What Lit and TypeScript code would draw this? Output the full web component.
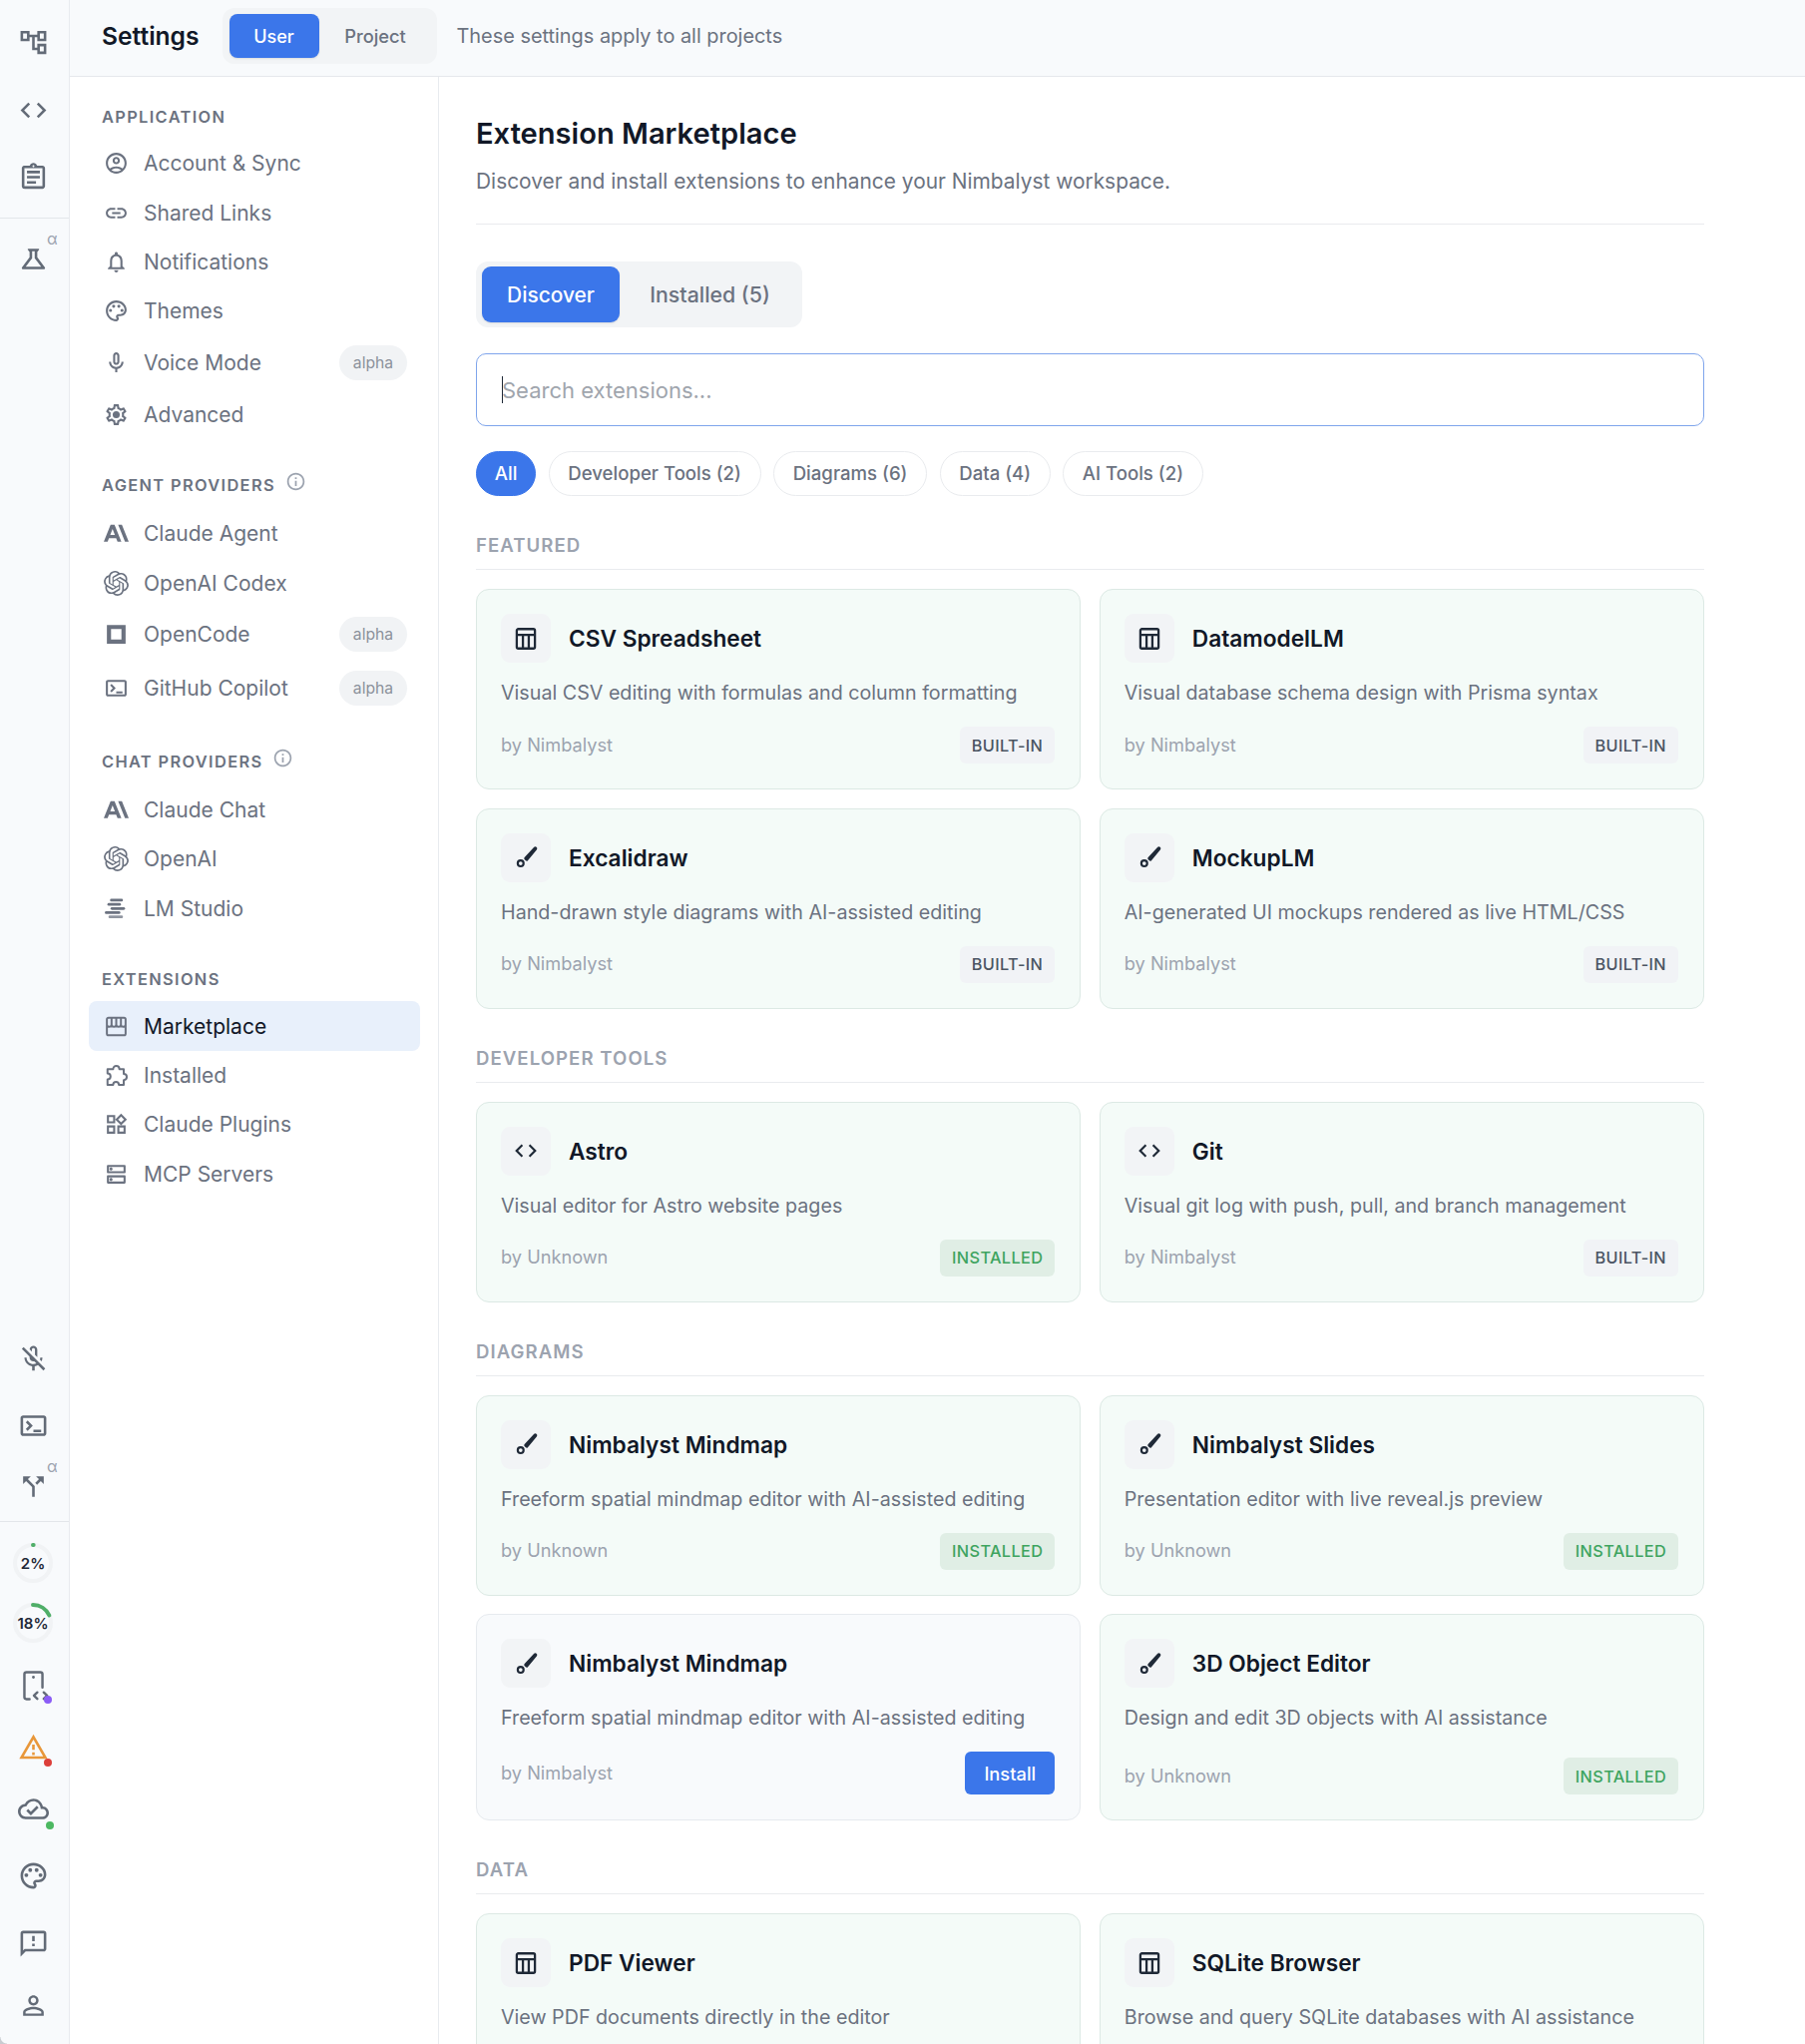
import { LitElement, html, css, svg } from "lit";
import { customElement } from "lit/decorators.js";

const P: Record<string, any> = {
  tree: svg`<path d="M22 11V3h-7v3H9V3H2v8h7V8h2v10h4v3h7v-8h-7v3h-2V8h2v3h7zM7 9H4V5h3v4zm10 6h3v4h-3v-4zm0-10h3v4h-3V5z"/>`,
  code: svg`<path d="M9.4 16.6L4.8 12l4.6-4.6L8 6l-6 6 6 6 1.4-1.4zm5.2 0l4.6-4.6-4.6-4.6L16 6l6 6-6 6-1.4-1.4z"/>`,
  clip: svg`<path d="M7 15h7v2H7zm0-4h10v2H7zm0-4h10v2H7zm12-4h-4.18C14.4 1.84 13.3 1 12 1c-1.3 0-2.4.84-2.82 2H5c-.14 0-.27.01-.4.04-.39.08-.74.28-1.01.55-.18.18-.33.4-.43.64-.1.23-.16.49-.16.77v14c0 .27.06.54.16.78s.25.45.43.64c.27.27.62.47 1.01.55.13.02.26.03.4.03h14c1.1 0 2-.9 2-2V5c0-1.1-.9-2-2-2zm-7-.25c.41 0 .75.34.75.75s-.34.75-.75.75-.75-.34-.75-.75.34-.75.75-.75zM19 19H5V5h14v14z"/>`,
  flask: svg`<path d="M13 11.33L18 18H6l5-6.67V6h2m2.96-2H8.04c-.42 0-.65.48-.39.81L9 6.5v4.17L3.2 18.4c-.49.66-.02 1.6.8 1.6h16c.82 0 1.29-.94.8-1.6L15 10.67V6.5l1.35-1.69c.26-.33.03-.81-.39-.81z"/>`,
  micoff: svg`<path d="M10.8 4.9c0-.66.54-1.2 1.2-1.2s1.2.54 1.2 1.2l-.01 3.91L15 10.6V5c0-1.66-1.34-3-3-3-1.54 0-2.79 1.16-2.96 2.65l1.76 1.76V4.9zM19 11h-1.7c0 .58-.1 1.13-.27 1.64l1.27 1.27c.44-.88.7-1.87.7-2.91zM4.41 2.86L3 4.27l6 6V11c0 1.66 1.34 3 3 3 .23 0 .44-.03.65-.08l1.66 1.66c-.71.33-1.5.52-2.31.52-2.76 0-5.3-2.1-5.3-5.1H5c0 3.41 2.72 6.23 6 6.72V21h2v-3.28c.91-.13 1.77-.45 2.55-.9l4.2 4.2 1.41-1.41L4.41 2.86z"/>`,
  term: svg`<path d="M20 4H4c-1.1 0-2 .9-2 2v12c0 1.1.9 2 2 2h16c1.1 0 2-.9 2-2V6c0-1.1-.9-2-2-2zm0 14H4V6h16v12zm-2-1h-6v-2h6v2zM7.5 16l-1.41-1.41L8.67 12 6.09 9.41 7.5 8l4 4-4 4z"/>`,
  split: svg`<path d="M14 4l2.29 2.29-2.88 2.88 1.42 1.42 2.88-2.88L20 10V4h-6zm-4 0H4v6l2.29-2.29 4.71 4.7V20h2v-8.41l-5.29-5.3L10 4z"/>`,
  warn: svg`<path transform="translate(0 -1.4)" d="M12 5.99L19.53 19H4.47L12 5.99M12 2L1 21h22L12 2zm1 14h-2v2h2v-2zm0-6h-2v4h2v-4z"/>`,
  cloud: svg`<path d="M19.35 10.04C18.67 6.59 15.64 4 12 4 9.11 4 6.6 5.64 5.35 8.04 2.34 8.36 0 10.91 0 14c0 3.31 2.69 6 6 6h13c2.76 0 5-2.24 5-5 0-2.64-2.05-4.78-4.65-4.96zM19 18H6c-2.21 0-4-1.79-4-4 0-2.05 1.53-3.76 3.56-3.97l1.07-.11.5-.95C8.08 7.14 9.94 6 12 6c2.62 0 4.88 1.86 5.39 4.43l.3 1.5 1.53.11c1.56.1 2.78 1.41 2.78 2.96 0 1.65-1.35 3-3 3zm-9-3.82l-2.09-2.09L6.5 13.5 10 17l6.01-6.01-1.41-1.41z"/>`,
  palette: svg`<path d="M12 22C6.49 22 2 17.51 2 12S6.49 2 12 2s10 4.04 10 9c0 3.31-2.69 6-6 6h-1.77c-.28 0-.5.22-.5.5 0 .12.05.23.13.33.41.47.64 1.06.64 1.67 0 1.38-1.12 2.5-2.5 2.5zm0-18c-4.41 0-8 3.59-8 8s3.59 8 8 8c.28 0 .5-.22.5-.5 0-.16-.08-.28-.14-.35-.41-.46-.63-1.05-.63-1.65 0-1.38 1.12-2.5 2.5-2.5H16c2.21 0 4-1.79 4-4 0-3.86-3.59-7-8-7z"/><circle cx="6.5" cy="11.5" r="1.5"/><circle cx="9.5" cy="7.5" r="1.5"/><circle cx="14.5" cy="7.5" r="1.5"/><circle cx="17.5" cy="11.5" r="1.5"/>`,
  feedback: svg`<path d="M20 2H4c-1.1 0-1.99.9-1.99 2L2 22l4-4h14c1.1 0 2-.9 2-2V4c0-1.1-.9-2-2-2zm0 14H5.17L4 17.17V4h16v12zm-9-4h2v2h-2zm0-6h2v4h-2z"/>`,
  person: svg`<path d="M12 5.9c1.16 0 2.1.94 2.1 2.1s-.94 2.1-2.1 2.1S9.9 9.16 9.9 8s.94-2.1 2.1-2.1m0 9c2.97 0 6.1 1.46 6.1 2.1v1.1H5.9V17c0-.64 3.13-2.1 6.1-2.1M12 4C9.79 4 8 5.79 8 8s1.79 4 4 4 4-1.79 4-4-1.79-4-4-4zm0 9c-2.67 0-8 1.34-8 4v3h16v-3c0-2.66-5.33-4-8-4z"/>`,
  filecode: svg`<path fill="none" stroke="currentColor" stroke-width="1.9" stroke-linecap="round" stroke-linejoin="round" d="M9 22H6.6A1.6 1.6 0 0 1 5 20.4V2.8a1.6 1.6 0 0 1 1.6-1.6h10.8a1.6 1.6 0 0 1 1.6 1.6V13M15 16.8l-2.6 2.5 2.6 2.5M20 16.8l2.6 2.5-2.6 2.5"/><circle cx="12" cy="5" r="1.1"/>`,
  account: svg`<path d="M12 2C6.48 2 2 6.48 2 12s4.48 10 10 10 10-4.48 10-10S17.52 2 12 2zM7.35 18.5C8.66 17.56 10.26 17 12 17s3.34.56 4.65 1.5c-1.31.94-2.91 1.5-4.65 1.5s-3.34-.56-4.65-1.5zm10.79-1.38C16.45 15.8 14.32 15 12 15s-4.45.8-6.14 2.12C4.7 15.73 4 13.95 4 12c0-4.42 3.58-8 8-8s8 3.58 8 8c0 1.95-.7 3.73-1.86 5.12z"/><path d="M12 6c-1.93 0-3.5 1.57-3.5 3.5S10.07 13 12 13s3.5-1.57 3.5-3.5S13.93 6 12 6zm0 5c-.83 0-1.5-.67-1.5-1.5S11.17 8 12 8s1.5.67 1.5 1.5S12.83 11 12 11z"/>`,
  link: svg`<path d="M3.9 12c0-1.71 1.39-3.1 3.1-3.1h4V7H7c-2.76 0-5 2.24-5 5s2.24 5 5 5h4v-1.9H7c-1.71 0-3.1-1.39-3.1-3.1zM8 13h8v-2H8v2zm9-6h-4v1.9h4c1.71 0 3.1 1.39 3.1 3.1s-1.39 3.1-3.1 3.1h-4V17h4c2.76 0 5-2.24 5-5s-2.24-5-5-5z"/>`,
  bell: svg`<path d="M12 22c1.1 0 2-.9 2-2h-4c0 1.1.9 2 2 2zm6-6v-5c0-3.07-1.63-5.64-4.5-6.32V4c0-.83-.67-1.5-1.5-1.5s-1.5.67-1.5 1.5v.68C7.64 5.36 6 7.92 6 11v5l-2 2v1h16v-1l-2-2zm-2 1H8v-6c0-2.48 1.51-4.5 4-4.5s4 2.02 4 4.5v6z"/>`,
  mic: svg`<path d="M12 14c1.66 0 3-1.34 3-3V5c0-1.66-1.34-3-3-3S9 3.34 9 5v6c0 1.66 1.34 3 3 3zm-1-9c0-.55.45-1 1-1s1 .45 1 1v6c0 .55-.45 1-1 1s-1-.45-1-1V5zm6 6c0 2.76-2.24 5-5 5s-5-2.24-5-5H5c0 3.53 2.61 6.43 6 6.92V21h2v-3.08c3.39-.49 6-3.39 6-6.92h-2z"/>`,
  gear: svg`<path d="M19.43 12.98c.04-.32.07-.64.07-.98 0-.34-.03-.66-.07-.98l2.11-1.65c.19-.15.24-.42.12-.64l-2-3.46c-.09-.16-.26-.25-.44-.25-.06 0-.12.01-.17.03l-2.49 1c-.52-.4-1.08-.73-1.69-.98l-.38-2.65C14.46 2.18 14.25 2 14 2h-4c-.25 0-.46.18-.49.42l-.38 2.65c-.61.25-1.17.59-1.69.98l-2.49-1c-.06-.02-.12-.03-.18-.03-.17 0-.34.09-.43.25l-2 3.46c-.13.22-.07.49.12.64l2.11 1.65c-.04.32-.07.65-.07.98 0 .33.03.66.07.98l-2.11 1.65c-.19.15-.24.42-.12.64l2 3.46c.09.16.26.25.44.25.06 0 .12-.01.17-.03l2.49-1c.52.4 1.08.73 1.69.98l.38 2.65c.03.24.24.42.49.42h4c.25 0 .46-.18.49-.42l.38-2.65c.61-.25 1.17-.59 1.69-.98l2.49 1c.06.02.12.03.18.03.17 0 .34-.09.43-.25l2-3.46c.12-.22.07-.49-.12-.64l-2.11-1.65zm-1.98-1.71c.04.31.05.52.05.73 0 .21-.02.43-.05.73l-.14 1.13.89.7 1.08.84-.7 1.21-1.27-.51-1.04-.42-.9.68c-.43.32-.84.56-1.25.73l-1.06.43-.16 1.13-.2 1.35h-1.4l-.19-1.35-.16-1.13-1.06-.43c-.43-.18-.83-.41-1.23-.71l-.91-.7-1.06.43-1.27.51-.7-1.21 1.08-.84.89-.7-.14-1.13c-.03-.31-.05-.54-.05-.74s.02-.43.05-.73l.14-1.13-.89-.7-1.08-.84.7-1.21 1.27.51 1.04.42.9-.68c.43-.32.84-.56 1.25-.73l1.06-.43.16-1.13.2-1.35h1.39l.19 1.35.16 1.13 1.06.43c.43.18.83.41 1.23.71l.91.7 1.06-.43 1.27-.51.7 1.21-1.07.85-.89.7.14 1.13z"/><circle cx="12" cy="12" r="3.4"/>`,
  claude: svg`<path d="M13.827 3.52h3.603L24 20h-3.603l-6.57-16.48zm-7.258 0h3.767L16.906 20h-3.674l-1.343-3.461H5.017l-1.344 3.46H0L6.57 3.522zm4.132 9.959L8.453 7.687 6.205 13.48H10.7z"/>`,
  openai: svg`<path d="M22.2819 9.8211a5.9847 5.9847 0 0 0-.5157-4.9108 6.0462 6.0462 0 0 0-6.5098-2.9A6.0651 6.0651 0 0 0 4.9807 4.1818a5.9847 5.9847 0 0 0-3.9977 2.9 6.0462 6.0462 0 0 0 .7427 7.0966 5.98 5.98 0 0 0 .511 4.9107 6.051 6.051 0 0 0 6.5146 2.9001A5.9847 5.9847 0 0 0 13.2599 24a6.0557 6.0557 0 0 0 5.7718-4.2058 5.9894 5.9894 0 0 0 3.9977-2.9001 6.0557 6.0557 0 0 0-.7475-7.0729zm-9.022 12.6081a4.4755 4.4755 0 0 1-2.8764-1.0408l.1419-.0804 4.7783-2.7582a.7948.7948 0 0 0 .3927-.6813v-6.7369l2.02 1.1686a.071.071 0 0 1 .038.052v5.5826a4.504 4.504 0 0 1-4.4945 4.4944zm-9.6607-4.1254a4.4708 4.4708 0 0 1-.5346-3.0137l.142.0852 4.783 2.7582a.7712.7712 0 0 0 .7806 0l5.8428-3.3685v2.3324a.0804.0804 0 0 1-.0332.0615L9.74 19.9502a4.4992 4.4992 0 0 1-6.1408-1.6464zM2.3408 7.8956a4.485 4.485 0 0 1 2.3655-1.9728V11.6a.7664.7664 0 0 0 .3879.6765l5.8144 3.3543-2.0201 1.1685a.0757.0757 0 0 1-.071 0l-4.8303-2.7865A4.504 4.504 0 0 1 2.3408 7.872zm16.5963 3.8558L13.1038 8.364 15.1192 7.2a.0757.0757 0 0 1 .071 0l4.8303 2.7913a4.4944 4.4944 0 0 1-.6765 8.1042v-5.6772a.79.79 0 0 0-.407-.667zm2.0107-3.0231l-.142-.0852-4.7735-2.7818a.7759.7759 0 0 0-.7854 0L9.409 9.2297V6.8974a.0662.0662 0 0 1 .0284-.0615l4.8303-2.7866a4.4992 4.4992 0 0 1 6.6802 4.66zM8.3065 12.863l-2.02-1.1638a.0804.0804 0 0 1-.038-.0567V6.0742a4.4992 4.4992 0 0 1 7.3757-3.4537l-.142.0805L8.704 5.459a.7948.7948 0 0 0-.3927.6813zm1.0976-2.3654l2.602-1.4998 2.6069 1.4998v2.9994l-2.5974 1.4997-2.6067-1.4997Z"/>`,
  opencode: svg`<path fill-rule="evenodd" d="M3 3h18v18H3zM7 7v10h10V7z"/>`,
  lm: svg`<rect x="6" y="2.5" width="12.5" height="2.6" rx="1.3"/><rect x="3.5" y="6.5" width="13" height="2.6" rx="1.3"/><rect x="6.5" y="10.5" width="14" height="2.6" rx="1.3"/><rect x="1" y="14.5" width="15" height="2.6" rx="1.3"/><rect x="4.5" y="18.5" width="14" height="2.6" rx="1.3" opacity=".75"/>`,
  store: svg`<path fill="none" stroke="currentColor" stroke-width="1.9" stroke-linejoin="round" stroke-linecap="round" d="M4.5 3.5h15A1.5 1.5 0 0 1 21 5v14a1.5 1.5 0 0 1-1.5 1.5h-15A1.5 1.5 0 0 1 3 19V5a1.5 1.5 0 0 1 1.5-1.5zM3 10c0 1.5 1.2 2.2 2.3 2.2S7.5 11.5 7.5 10c0 1.5 1.1 2.2 2.25 2.2S12 11.5 12 10c0 1.5 1.1 2.2 2.25 2.2S16.5 11.5 16.5 10c0 1.5 1.1 2.2 2.2 2.2S21 11.5 21 10M7.5 3.5V10M12 3.5V10M16.5 3.5V10"/>`,
  puzzle: svg`<path fill="none" stroke="currentColor" stroke-width="1.9" stroke-linejoin="round" d="M3.6 6H9c0-1.8 1.3-3.2 3-3.2S15 4.2 15 6h4.2v4.5c1.6 0 2.9 1.3 2.9 3s-1.3 3-2.9 3v4.7h-4.7c0-1.7-1-3-2.7-3s-2.8 1.3-2.8 3H3.6v-5.3c1.7 0 2.9-1.1 2.9-2.9S5.3 10.1 3.6 10.1z"/>`,
  widgets: svg`<path d="M16.66 4.52l2.83 2.83-2.83 2.83-2.83-2.83 2.83-2.83M9 5v4H5V5h4m10 10v4h-4v-4h4M9 15v4H5v-4h4m7.66-13.31L11 7.34 16.66 13l5.66-5.66-5.66-5.65zM11 3H3v8h8V3zm10 10h-8v8h8v-8zm-10 0H3v8h8v-8z"/>`,
  dns: svg`<path d="M19 15v4H5v-4h14m1-2H4c-.55 0-1 .45-1 1v6c0 .55.45 1 1 1h16c.55 0 1-.45 1-1v-6c0-.55-.45-1-1-1zM7 18.5c-.82 0-1.5-.67-1.5-1.5s.68-1.5 1.5-1.5 1.5.67 1.5 1.5-.67 1.5-1.5 1.5zM19 5v4H5V5h14m1-2H4c-.55 0-1 .45-1 1v6c0 .55.45 1 1 1h16c.55 0 1-.45 1-1V4c0-.55-.45-1-1-1zM7 8.5c-.82 0-1.5-.67-1.5-1.5S6.18 5.5 7 5.5s1.5.68 1.5 1.5S7.83 8.5 7 8.5z"/>`,
  info: svg`<path d="M11 7h2v2h-2zm0 4h2v6h-2zm1-9C6.48 2 2 6.48 2 12s4.48 10 10 10 10-4.48 10-10S17.52 2 12 2zm0 18c-4.41 0-8-3.59-8-8s3.59-8 8-8 8 3.59 8 8-3.59 8-8 8z"/>`,
  table: svg`<path fill="none" stroke="currentColor" stroke-width="2.1" stroke-linejoin="round" d="M5 3h14a1.4 1.4 0 0 1 1.4 1.4v15.2A1.4 1.4 0 0 1 19 21H5a1.4 1.4 0 0 1-1.4-1.4V4.4A1.4 1.4 0 0 1 5 3zM3.6 8.5h16.8M9.3 8.5V21M14.7 8.5V21"/>`,
  brush: svg`<path d="M19.6 2.6c.7-.7 1.8-.6 2.4.1.6.6.6 1.6 0 2.3l-8.2 9.9c-.5.6-1.3.6-1.9.1l-1-.9c-.6-.5-.6-1.4-.1-2z"/><circle cx="7.2" cy="17.6" r="2.7" fill="none" stroke="currentColor" stroke-width="2"/>`,
};

const icon = (n: string) => html`<svg class="ic" viewBox="0 0 24 24" fill="currentColor" aria-hidden="true">${P[n]}</svg>`;

const ring = (label: string, arc: number) => {
  const r = 18, c = 2 * Math.PI * r;
  return html`<div class="gauge">
    <svg viewBox="0 0 44 44" width="44" height="44" aria-hidden="true">
      <circle cx="22" cy="22" r="${r}" fill="none" stroke="#f1f3f5" stroke-width="4"></circle>
      <circle cx="22" cy="22" r="${r}" fill="none" stroke="#4fae68" stroke-width="4" stroke-linecap="round"
        stroke-dasharray="${(arc / 100) * c} ${c}" transform="rotate(-90 22 22)"></circle>
    </svg>
    <span>${label}</span>
  </div>`;
};

type Nav = { t: string; i: string; alpha?: boolean; active?: boolean };
const NAV: { h: string; info?: boolean; items: Nav[] }[] = [
  { h: "APPLICATION", items: [
    { t: "Account & Sync", i: "account" }, { t: "Shared Links", i: "link" }, { t: "Notifications", i: "bell" },
    { t: "Themes", i: "palette" }, { t: "Voice Mode", i: "mic", alpha: true }, { t: "Advanced", i: "gear" } ] },
  { h: "AGENT PROVIDERS", info: true, items: [
    { t: "Claude Agent", i: "claude" }, { t: "OpenAI Codex", i: "openai" }, { t: "OpenCode", i: "opencode", alpha: true },
    { t: "GitHub Copilot", i: "term", alpha: true } ] },
  { h: "CHAT PROVIDERS", info: true, items: [
    { t: "Claude Chat", i: "claude" }, { t: "OpenAI", i: "openai" }, { t: "LM Studio", i: "lm" } ] },
  { h: "EXTENSIONS", items: [
    { t: "Marketplace", i: "store", active: true }, { t: "Installed", i: "puzzle" }, { t: "Claude Plugins", i: "widgets" }, { t: "MCP Servers", i: "dns" } ] },
];

type Card = { t: string; i: string; d: string; by?: string; s?: "b" | "i" | "x" };
const SECTIONS: { h: string; cards: Card[] }[] = [
  { h: "FEATURED", cards: [
    { t: "CSV Spreadsheet", i: "table", d: "Visual CSV editing with formulas and column formatting", by: "Nimbalyst", s: "b" },
    { t: "DatamodelLM", i: "table", d: "Visual database schema design with Prisma syntax", by: "Nimbalyst", s: "b" },
    { t: "Excalidraw", i: "brush", d: "Hand-drawn style diagrams with AI-assisted editing", by: "Nimbalyst", s: "b" },
    { t: "MockupLM", i: "brush", d: "AI-generated UI mockups rendered as live HTML/CSS", by: "Nimbalyst", s: "b" } ] },
  { h: "DEVELOPER TOOLS", cards: [
    { t: "Astro", i: "code", d: "Visual editor for Astro website pages", by: "Unknown", s: "i" },
    { t: "Git", i: "code", d: "Visual git log with push, pull, and branch management", by: "Nimbalyst", s: "b" } ] },
  { h: "DIAGRAMS", cards: [
    { t: "Nimbalyst Mindmap", i: "brush", d: "Freeform spatial mindmap editor with AI-assisted editing", by: "Unknown", s: "i" },
    { t: "Nimbalyst Slides", i: "brush", d: "Presentation editor with live reveal.js preview", by: "Unknown", s: "i" },
    { t: "Nimbalyst Mindmap", i: "brush", d: "Freeform spatial mindmap editor with AI-assisted editing", by: "Nimbalyst", s: "x" },
    { t: "3D Object Editor", i: "brush", d: "Design and edit 3D objects with AI assistance", by: "Unknown", s: "i" } ] },
  { h: "DATA", cards: [
    { t: "PDF Viewer", i: "table", d: "View PDF documents directly in the editor" },
    { t: "SQLite Browser", i: "table", d: "Browse and query SQLite databases with AI assistance" } ] },
];

@customElement("app-root")
export class AppRoot extends LitElement {
  static styles = css`
    :host { display: grid; grid-template-columns: 70px 1fr; grid-template-rows: 77px 1fr; width: 100%; height: 2048px; overflow: hidden;
      font-family: Inter, "Noto Sans", sans-serif; background: #fff; color: #111827; position: relative; }
    * { box-sizing: border-box; }
    .ic { width: 25px; height: 25px; flex: none; display: block; }

    .rail { grid-row: 1 / 3; background: #f8fafc; border-right: 1px solid #e8ebef; display: flex; flex-direction: column; padding: 14px 0 11px; color: #636b77; }
    .rail-item { height: 56px; display: flex; align-items: center; justify-content: center; position: relative; flex: none; padding-right: 3px; }
    .rail-item .ic { width: 31px; height: 31px; }
    .rail-sep { height: 1px; background: #e3e6ea; flex: none; }
    .sup { position: absolute; left: 47px; top: 0; font-size: 16px; line-height: 16px; color: #9ca3af; }
    .dot { position: absolute; width: 8px; height: 8px; border-radius: 50%; left: 44px; top: 38px; }
    .dot.low { left: 46px; top: 41px; }
    .spacer { flex: 1; }
    .gauge { position: relative; width: 44px; height: 44px; display: flex; align-items: center; justify-content: center; }
    .gauge svg { position: absolute; inset: 0; }
    .gauge span { position: relative; font-size: 15px; font-weight: 600; color: #1f2937; white-space: nowrap; }

    .header { grid-column: 2; background: #f8fafc; border-bottom: 1px solid #e5e8ec; display: flex; align-items: center; padding: 0 0 4px 32px; height: 77px; }
    .header h2 { margin: 0; font-size: 24.6px; font-weight: 600; color: #111827; }
    .seg { margin-left: 23px; height: 56px; width: 215px; border-radius: 12px; background: #f2f4f6; padding: 6px 7px; display: flex; align-items: stretch; flex: none; }
    .seg .on { width: 90px; border-radius: 8px; background: #3b76ea; color: #fff; font-size: 18px; font-weight: 500; display: flex; align-items: center; justify-content: center; box-shadow: 0 1px 2px rgba(0,0,0,.1); }
    .seg .off { flex: 1; color: #6b7280; font-size: 18.3px; font-weight: 500; display: flex; align-items: center; justify-content: center; padding-left: 2px; }
    .hint { margin-left: 20px; font-size: 19.9px; color: #6b7280; }

    .body { grid-column: 2; display: flex; min-height: 0; }
    .nav { width: 370px; flex: none; border-right: 1px solid #e8ebef; padding: 30px 18px 0 19px; }
    .nav h3 { margin: 0 0 12px 13px; height: 20px; font-size: 16.4px; line-height: 20px; font-weight: 600; letter-spacing: 1.35px; color: #6b7280; display: flex; align-items: center; gap: 10px; }
    .nav section + section { margin-top: 36.5px; }
    .nav h3.withinfo { margin-bottom: 13.5px; }
    .nav h3 .ic { width: 21px; height: 21px; color: #9ca3af; margin-top: -7px; }
    .item { height: 49.4px; display: flex; align-items: center; gap: 15px; padding: 0 13px 0 15px; border-radius: 8px; font-size: 21px; color: #6b7280; }
    .item .ic { width: 25px; height: 25px; color: #6b7280; }
    .item.alpha { height: 54px; }
    .item.on { background: #e8f0fb; color: #111827; }
    .badge-a { margin-left: auto; height: 35px; width: 68px; border-radius: 18px; background: #f1f3f5; color: #8b919b; font-size: 15.7px; display: flex; align-items: center; justify-content: center; }

    .main { flex: 1; padding: 39px 101px 0 37px; min-width: 0; }
    .main h1 { margin: 0; font-size: 29.1px; line-height: 36px; font-weight: 600; color: #111827; }
    .sub { margin: 17px 0 0; font-size: 20.9px; line-height: 26px; color: #6b7280; padding-bottom: 29px; border-bottom: 1px solid #e9ebee; }
    .tabs { margin-top: 37px; width: 327px; height: 66px; border-radius: 12px; background: #f2f4f6; padding: 5px 6px; display: flex; align-items: stretch; }
    .tabs .on { width: 138px; border-radius: 9px; background: #3b76ea; color: #fff; font-size: 20.9px; font-weight: 500; display: flex; align-items: center; justify-content: center; box-shadow: 0 1px 2px rgba(0,0,0,.1); }
    .tabs .off { flex: 1; color: #6b7280; font-size: 21.3px; font-weight: 500; display: flex; align-items: center; justify-content: center; padding-left: 4px; }
    .search { margin-top: 26px; height: 73px; border: 1.5px solid #7fa5ec; border-radius: 10px; display: flex; align-items: center; padding-left: 24.5px; font-size: 22px; color: #a0a5ad; }
    .caret { width: 1.5px; height: 27px; background: #1f2937; margin-right: -1px; }
    .filters { margin-top: 25px; display: flex; gap: 12.4px; }
    .chip { height: 45px; padding: 0 18.7px 2px; border: 1px solid #e9ebee; border-radius: 23px; display: flex; align-items: center; font-size: 18.6px; font-weight: 500; color: #6b7280; background: #fff; }
    .chip.on { background: #3b76ea; border-color: #3b76ea; color: #fff; padding: 0 17.8px 2px; }

    .group { margin-top: 39px; }
    .group h4 { margin: 0 0 19px; height: 35px; line-height: 20px; padding-bottom: 14px; border-bottom: 1px solid #e9ebee; font-size: 18.6px; font-weight: 600; letter-spacing: 1.05px; color: #9ca3af; }
    .grid { display: grid; grid-template-columns: 1fr 1fr; gap: 18.5px; }
    .card { border: 1px solid #dce9e4; background: #f4fbf8; border-radius: 13px; padding: 24px 25px 25px 24px; display: flex; flex-direction: column; min-height: 201px; }
    .card.plain { background: #f8fafc; border-color: #e6eaee; }
    .head { display: flex; align-items: center; gap: 18px; }
    .ibox { width: 50px; height: 49px; border-radius: 9px; background: #f2f4f6; color: #1f2937; display: flex; align-items: center; justify-content: center; flex: none; }
    .ibox .ic { width: 26px; height: 26px; }
    .head b { font-size: 22.7px; font-weight: 600; color: #111827; }
    .desc { margin: 17px 0 21px; font-size: 19.7px; line-height: 26px; color: #6b7280; }
    .foot { margin-top: auto; display: flex; align-items: center; justify-content: space-between; font-size: 18.2px; color: #9ca3af; }
    .foot .by { padding-bottom: 2px; }
    .tag { height: 37px; padding: 0 12px; border-radius: 6px; display: flex; align-items: center; font-size: 16.3px; font-weight: 500; letter-spacing: .35px; }
    .tag.b { background: #f1f3f6; color: #4b5563; }
    .tag.i { background: #e0eee5; color: #3ea45f; }
    .install { height: 43px; width: 90px; border-radius: 6px; background: #3b76ea; color: #fff; font-size: 18.3px; font-weight: 500; display: flex; align-items: center; justify-content: center; }
    .corner { position: absolute; left: 0; bottom: 0; width: 7px; height: 7px; background: radial-gradient(circle at 100% 0, transparent 6px, #c9ccd1 7px); }
  `;

  private rail(n: string, gap: number, opts: { sup?: boolean; dot?: string; low?: boolean; color?: string } = {}) {
    return html`<div class="rail-item" style="margin-top:${gap}px;${opts.color ? `color:${opts.color}` : ""}">
      ${icon(n)}${opts.sup ? html`<span class="sup">α</span>` : ""}${opts.dot ? html`<span class="dot ${opts.low ? "low" : ""}" style="background:${opts.dot}"></span>` : ""}
    </div>`;
  }

  render() {
    return html`
      <aside class="rail">
        ${this.rail("tree", 0)}${this.rail("code", 12)}${this.rail("clip", 11)}
        <div class="rail-sep" style="margin-top:13px"></div>
        ${this.rail("flask", 12, { sup: true })}
        <div class="spacer"></div>
        ${this.rail("micoff", 0)}${this.rail("term", 11)}${this.rail("split", 5, { sup: true })}
        <div class="rail-sep" style="margin-top:7px"></div>
        <div class="rail-item" style="margin-top:13px">${ring("2%", 0.6)}</div>
        <div class="rail-item" style="margin-top:4px">${ring("18%", 18)}</div>
        ${this.rail("filecode", 7, { dot: "#8b5cf6" })}
        ${this.rail("warn", 7, { color: "#e8973a", dot: "#dc3f3a" })}
        ${this.rail("cloud", 4, { dot: "#4cb861", low: true })}
        ${this.rail("palette", 11)}${this.rail("feedback", 12)}${this.rail("person", 6)}
      </aside>
      <header class="header">
        <h2>Settings</h2>
        <div class="seg"><div class="on">User</div><div class="off">Project</div></div>
        <div class="hint">These settings apply to all projects</div>
      </header>
      <div class="body">
        <nav class="nav">
          ${NAV.map((s) => html`<section>
            <h3 class=${s.info ? "withinfo" : ""}>${s.h}${s.info ? icon("info") : ""}</h3>
            ${s.items.map((it) => html`<div class="item ${it.alpha ? "alpha" : ""} ${it.active ? "on" : ""}">
              ${icon(it.i)}<span>${it.t}</span>${it.alpha ? html`<span class="badge-a">alpha</span>` : ""}
            </div>`)}
          </section>`)}
        </nav>
        <main class="main">
          <h1>Extension Marketplace</h1>
          <p class="sub">Discover and install extensions to enhance your Nimbalyst workspace.</p>
          <div class="tabs"><div class="on">Discover</div><div class="off">Installed (5)</div></div>
          <div class="search"><span class="caret"></span><span>Search extensions...</span></div>
          <div class="filters">
            <div class="chip on">All</div><div class="chip">Developer Tools (2)</div><div class="chip">Diagrams (6)</div><div class="chip">Data (4)</div><div class="chip">AI Tools (2)</div>
          </div>
          ${SECTIONS.map((g) => html`<section class="group">
            <h4>${g.h}</h4>
            <div class="grid">
              ${g.cards.map((c) => html`<article class="card ${c.s === "x" ? "plain" : ""}">
                <div class="head"><div class="ibox">${icon(c.i)}</div><b>${c.t}</b></div>
                <p class="desc">${c.d}</p>
                ${c.by ? html`<div class="foot"><span class="by">by ${c.by}</span>
                  ${c.s === "x" ? html`<span class="install">Install</span>` : html`<span class="tag ${c.s}">${c.s === "b" ? "BUILT-IN" : "INSTALLED"}</span>`}
                </div>` : ""}
              </article>`)}
            </div>
          </section>`)}
        </main>
      </div>
      <div class="corner"></div>
    `;
  }
}
